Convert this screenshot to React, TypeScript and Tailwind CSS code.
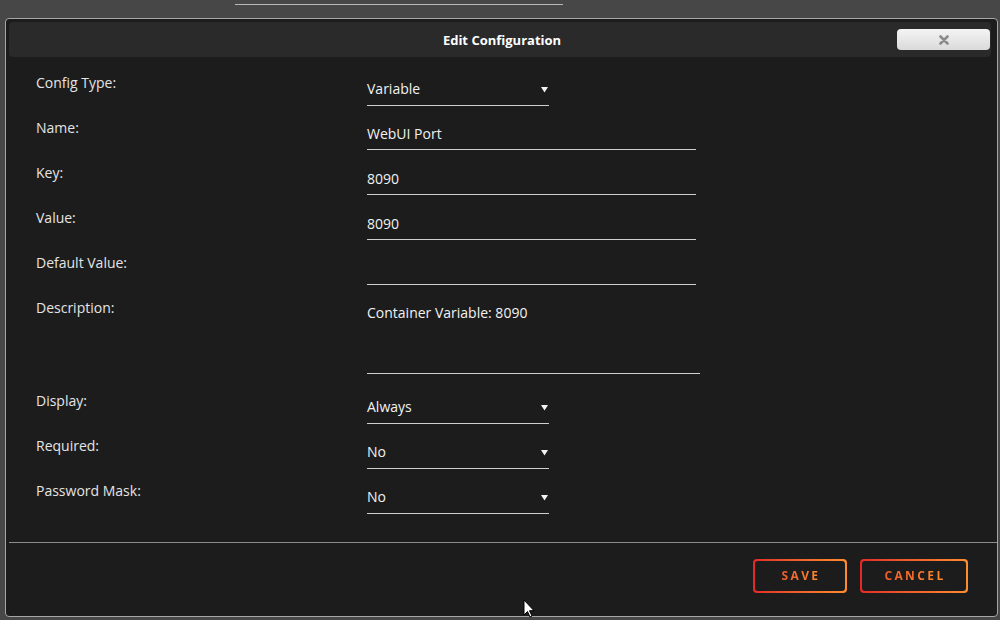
import React from 'react';

type Field = {
  label: string;
  value: string;
  kind: 'select' | 'text' | 'area';
};

const fields: Field[] = [
  { label: 'Config Type:', value: 'Variable', kind: 'select' },
  { label: 'Name:', value: 'WebUI Port', kind: 'text' },
  { label: 'Key:', value: '8090', kind: 'text' },
  { label: 'Value:', value: '8090', kind: 'text' },
  { label: 'Default Value:', value: '', kind: 'text' },
  { label: 'Description:', value: 'Container Variable: 8090', kind: 'area' },
  { label: 'Display:', value: 'Always', kind: 'select' },
  { label: 'Required:', value: 'No', kind: 'select' },
  { label: 'Password Mask:', value: 'No', kind: 'select' },
];

function Arrow() {
  return (
    <svg width="7" height="7" viewBox="0 0 7 7" className="mt-[1px]">
      <path d="M0 1h7L3.5 6.5z" fill="#f2f2f2" />
    </svg>
  );
}

function FieldRow({ field }: { field: Field }) {
  const tall = field.kind === 'area';
  return (
    <div className={`flex items-start ${tall ? 'h-[93px]' : 'h-[45px]'}`}>
      <div className="w-[331px] text-[#e4e4e4]">{field.label}</div>
      {field.kind === 'select' && (
        <div className="w-[182px] pt-[6px] pb-[8px] border-b border-[#cfcfcf] flex items-center justify-between pr-[1px] text-[#f2f2f2]">
          <span>{field.value}</span>
          <Arrow />
        </div>
      )}
      {field.kind === 'text' && (
        <div className="w-[329px] h-[30px] pt-[6px] border-b border-[#cfcfcf] text-[#f2f2f2]">
          {field.value}
        </div>
      )}
      {field.kind === 'area' && (
        <div className="w-[333px] h-[74px] pt-[5px] border-b border-[#cfcfcf] text-[#f2f2f2]">
          {field.value}
        </div>
      )}
    </div>
  );
}

function GradientButton({ label, width }: { label: string; width: string }) {
  return (
    <div className={`${width} h-[34px] p-[2px] rounded-[4px] bg-gradient-to-r from-[#e22828] to-[#ff8c2f]`}>
      <div className="w-full h-full rounded-[3px] bg-[#1c1c1c] flex items-center justify-center">
        <span className="text-[12px] font-bold tracking-[2.4px] pl-[2px] bg-gradient-to-r from-[#ef5a2a] to-[#ff8c2f] bg-clip-text text-transparent">
          {label}
        </span>
      </div>
    </div>
  );
}

export default function App() {
  return (
    <div className="relative w-[1000px] h-[620px] overflow-hidden bg-[#474747] font-['Open_Sans','Noto_Sans',sans-serif] text-[14px] leading-4">
      <div className="h-[18px] pt-[4px]">
        <div className="ml-[235px] w-[328px] h-px bg-[#b8b8b8]" />
      </div>

      <div className="ml-[5px] w-[993px] h-[599px] border border-[#a6a6a6] rounded-[4px] bg-[#1c1c1c] pl-[3px] pr-[3px] pt-[3px] flex flex-col">
        {/* title bar */}
        <div className="h-[35px] mr-[3px] bg-[#2a2a2a] rounded-[4px] grid grid-cols-[1fr_auto_1fr] items-center">
          <div />
          <div className="font-bold text-[13px] text-white pl-[4px]">Edit Configuration</div>
          <div className="flex justify-end pr-[1px]">
            <div className="w-[93px] h-[21px] rounded-[4px] bg-gradient-to-b from-[#f4f4f4] to-[#dadada] flex items-center justify-center">
              <svg width="10" height="10" viewBox="0 0 10 10">
                <path d="M1.5 1.5l7 7M8.5 1.5l-7 7" stroke="#8a8a8a" strokeWidth="2.6" strokeLinecap="round" />
              </svg>
            </div>
          </div>
        </div>

        {/* form */}
        <div className="pl-[27px] pt-[18px]">
          {fields.map((f) => (
            <FieldRow key={f.label} field={f} />
          ))}
        </div>

        <div className="mt-[14px] -mr-[3px] h-px bg-[#8c8c8c]" />

        <div className="mt-[16px] pr-[26px] flex justify-end gap-[13px]">
          <GradientButton label="SAVE" width="w-[94px]" />
          <GradientButton label="CANCEL" width="w-[108px]" />
        </div>
      </div>

      {/* mouse pointer */}
      <svg className="absolute left-[523px] top-[599px]" width="12" height="19" viewBox="0 0 12 19">
        <path d="M1 1v15l3.5-3.5 2.5 5.5 2-1-2.5-5.3H11z" fill="#fff" stroke="#000" strokeWidth="1" />
      </svg>
    </div>
  );
}
